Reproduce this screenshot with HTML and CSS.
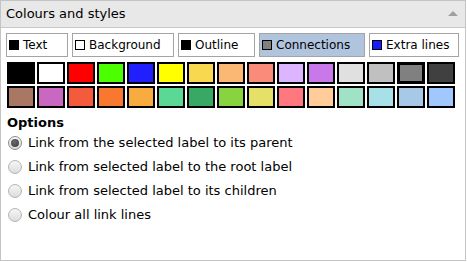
FILE: index.html
```html
<!DOCTYPE html>
<html lang="en">
<head>
    <meta charset="UTF-8">
    <title>Colours and styles</title>
    <link rel="stylesheet" href="styles.css">
</head>
<body>
    <div class="panel">
        <div class="panel-head">
            <span>Colours and styles</span>
            <span class="collapse"></span>
        </div>

        <div class="targets">
            <div class="target w-text"><span class="chip" style="background:#000000"></span>Text</div>
            <div class="target w-bg"><span class="chip" style="background:#ffffff"></span>Background</div>
            <div class="target w-outline"><span class="chip" style="background:#000000"></span>Outline</div>
            <div class="target w-conn active"><span class="chip" style="background:#808080"></span>Connections</div>
            <div class="target w-extra"><span class="chip" style="background:#1a1aff"></span>Extra lines</div>
        </div>

        <div class="palette">
            <div class="swatch" style="background:#000000"></div>
            <div class="swatch" style="background:#ffffff"></div>
            <div class="swatch" style="background:#ff0000"></div>
            <div class="swatch" style="background:#4cff00"></div>
            <div class="swatch" style="background:#2020ff"></div>
            <div class="swatch" style="background:#ffff00"></div>
            <div class="swatch" style="background:#f8d84e"></div>
            <div class="swatch" style="background:#fab874"></div>
            <div class="swatch" style="background:#fa8a7a"></div>
            <div class="swatch" style="background:#dcb4ff"></div>
            <div class="swatch" style="background:#c878e8"></div>
            <div class="swatch" style="background:#e0e0e0"></div>
            <div class="swatch" style="background:#c0c0c0"></div>
            <div class="swatch selected" style="background:#808080"></div>
            <div class="swatch" style="background:#404040"></div>

            <div class="swatch" style="background:#a87864"></div>
            <div class="swatch" style="background:#c868c0"></div>
            <div class="swatch" style="background:#f45a3c"></div>
            <div class="swatch" style="background:#f87830"></div>
            <div class="swatch" style="background:#f8ac40"></div>
            <div class="swatch" style="background:#5cd896"></div>
            <div class="swatch" style="background:#38a866"></div>
            <div class="swatch" style="background:#88d440"></div>
            <div class="swatch" style="background:#e4e068"></div>
            <div class="swatch" style="background:#ff7880"></div>
            <div class="swatch" style="background:#ffcc9a"></div>
            <div class="swatch" style="background:#a0e2c6"></div>
            <div class="swatch" style="background:#a8e0e8"></div>
            <div class="swatch" style="background:#a8c8e8"></div>
            <div class="swatch" style="background:#a0c8ff"></div>
        </div>

        <div class="options">
            <div class="options-title">Options</div>
            <label class="option"><input type="radio" name="link" checked>Link from the selected label to its parent</label>
            <label class="option"><input type="radio" name="link">Link from selected label to the root label</label>
            <label class="option"><input type="radio" name="link">Link from selected label to its children</label>
            <label class="option"><input type="radio" name="link">Colour all link lines</label>
        </div>
    </div>
</body>
</html>
```

FILE: styles.css
```css
body {
    margin: 0;
    font-family: "DejaVu Sans", Verdana, sans-serif;
    font-size: 13px;
    color: #000;
    background: #fff;
}

.panel {
    width: 466px;
    height: 261px;
    box-sizing: border-box;
    border: 1px solid #c4c4c4;
    background: #fff;
}

.panel-head {
    display: flex;
    justify-content: space-between;
    align-items: center;
    height: 26px;
    padding: 0 7px 0 5px;
    background: #e8e8e8;
    border-bottom: 1px solid #c8c8c8;
    line-height: 26px;
}

.collapse {
    width: 0;
    height: 0;
    border-left: 5px solid transparent;
    border-right: 5px solid transparent;
    border-bottom: 5px solid #a0a0a0;
    margin-top: -1px;
}

.targets {
    display: flex;
    gap: 4px;
    margin-top: 5px;
    padding-left: 5px;
}

.target {
    display: flex;
    align-items: center;
    gap: 4px;
    height: 24px;
    box-sizing: border-box;
    padding-left: 2px;
    border: 1px solid #a4a4a4;
    background: #fff;
    font-size: 12px;
    white-space: nowrap;
}

.target.active {
    background: #b0c4de;
}

.w-text { width: 62px; }
.w-bg { width: 102px; }
.w-outline { width: 77px; }
.w-conn { width: 106px; }
.w-extra { width: 90px; }

.chip {
    width: 10px;
    height: 10px;
    box-sizing: border-box;
    border: 1px solid #000;
    flex-shrink: 0;
}

.palette {
    display: grid;
    grid-template-columns: repeat(15, 28px);
    grid-auto-rows: 22px;
    gap: 2px;
    margin-top: 5px;
    padding-left: 6px;
}

.swatch {
    box-sizing: border-box;
    border: 2px solid #000;
}

.swatch.selected {
    border-width: 3px;
}

.options {
    padding-left: 6px;
}

.options-title {
    margin-top: 7px;
    font-weight: bold;
    line-height: 16px;
}

.option {
    display: flex;
    align-items: center;
    height: 24px;
    line-height: 20px;
}

.option input {
    appearance: none;
    -webkit-appearance: none;
    width: 14px;
    height: 14px;
    margin: 0 6px 0 1px;
    border: 1px solid #b4b4b4;
    border-radius: 50%;
    background: linear-gradient(#f6f6f6, #dcdcdc);
    box-sizing: border-box;
    display: flex;
    align-items: center;
    justify-content: center;
}

.option input:checked {
    border-color: #8c8c8c;
}

.option input:checked::after {
    content: "";
    width: 8px;
    height: 8px;
    border-radius: 50%;
    background: radial-gradient(circle at 40% 35%, #6a6a6a, #3c3c3c);
}
```
